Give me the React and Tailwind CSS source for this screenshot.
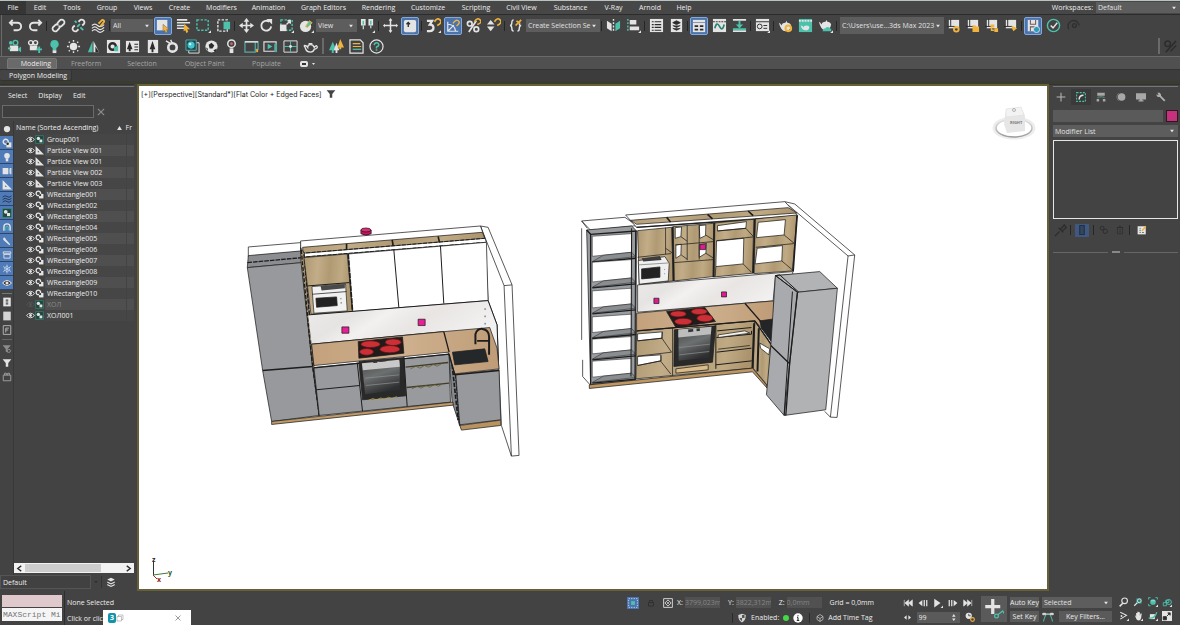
import { useState } from "react";
import clsx from "clsx";

const W = "#e4e4e4";
const T = "#4cc2ad";
const Y = "#f0b43c";
const G = "#8f8f8f";
const D = "#2b2b2b";

const line = (color, width = 1.5) => ({
  fill: "none",
  stroke: color,
  strokeWidth: width,
});

// All icons are drawn on a 16x16 grid
const icons = {
  undo: <path d="M5 2 2 5l3 3M2 5h8a4 4 0 0 1 0 8H6" {...line(W, 2)} />,
  redo: <path d="m11 2 3 3-3 3M14 5H6a4 4 0 0 0 0 8h4" {...line(W, 2)} />,
  link: (
    <g {...line(W, 1.9)}>
      <path d="m6 7 2-3 2-2a3 3 0 0 1 4 4l-3 3-3 0M10 9l-2 3-2 2a3 3 0 0 1-4-4l3-3 3 0" />
    </g>
  ),
  unlink: (
    <g {...line(W, 1.9)}>
      <path d="m8 4 2-2a3 3 0 0 1 4 4l-2 2M8 12l-2 2a3 3 0 0 1-4-4l2-2" />
      <path d="m4 3 2 2m4 5 3 3M6.500 9.500l3-3" stroke={T} />
    </g>
  ),
  bind: (
    <g {...line(W, 1.3)}>
      <path d="M1 8q3-3 6 0t7-1M1 11q3-3 6 0t7-1M1 14q3-3 6 0t7-1" />
      <path d="m8 6 4-4a2 2 0 0 1 2 2l-4 5" stroke={Y} strokeWidth="2" />
    </g>
  ),
  select: (
    <g>
      <path d="M1 1h12v12H1z" fill={W} />
      <path d="m8 6 7 6-3 0 1 3-2 1-1-3-2 1z" fill={Y} stroke="#6b5a35" strokeWidth="0.500" />
    </g>
  ),
  byName: (
    <g>
      <path d="M1 2h11M1 5h14M1 8h8M1 11h8" {...line(W, 1.7)} />
      <path d="m9 6 6 6-3 0 1 3-2 1-1-3-2 1z" fill={Y} />
    </g>
  ),
  region: (
    <g>
      <path d="M1 2h12v11H1z" {...line(T)} strokeDasharray="2.5 1.5" />
      <path d="M16 13v3h-3z" fill={W} />
    </g>
  ),
  crossing: (
    <g>
      <path d="M2 2h10v12H2z" {...line(W)} strokeDasharray="2.5 1.5" />
      <path d="M8 4h7v8H8z" fill={T} />
    </g>
  ),
  move: (
    <g fill={W}>
      <path d="M8 3v10M3 8h10" {...line(W, 1.8)} />
      <path d="m8 0 3 4H5zM8 16l3-4H5zM0 8l4-3v6zM16 8l-4-3v6z" />
    </g>
  ),
  rotate: (
    <g>
      <path d="M11 4a5.300 5.300 0 1 0 2 5" {...line(W, 2)} />
      <path d="M8 1h6v6z" fill={W} />
    </g>
  ),
  scale: (
    <g>
      <path d="M2 2h12v11H2z" {...line(T)} strokeDasharray="2.5 1.5" />
      <path d="M1 7h7v7H1z" fill={W} />
      <path d="m8 7 4-4M9 3h3v3" {...line(W)} />
      <path d="M16 13v3h-3z" fill={W} />
    </g>
  ),
  place: (
    <g>
      <circle cx="7" cy="9" r="6" fill={W} />
      <path d="m7 9 4-6 3 2-5 5z" fill={T} stroke={Y} />
      <path d="M16 13v3h-3z" fill={W} />
    </g>
  ),
  pivot: (
    <g>
      <path d="M1 1h5v7H1zM9 1h5v7H9z" fill={W} />
      <path d="M3.500 3v4M11.500 3v4" {...line(T, 1.5)} />
      <path d="M3.500 8v4M11.500 8v3" {...line(W, 1.2)} />
      <path d="M16 13v3h-3z" fill={W} />
    </g>
  ),
  manipulate: (
    <g fill={W}>
      <path d="M8 1v14M1 8h14" {...line(W, 1.6)} />
      <path d="M6 3h4L8 0zM6 13h4l-2 3zM2 6v4L0 8zM14 6v4l2-2z" />
    </g>
  ),
  keyboard: (
    <g>
      <rect x="1" y="1" width="14" height="14" rx="2" fill={W} />
      <path d="M6 9V4M4 6l2-2 2 2" {...line(D)} />
    </g>
  ),
  snap: (
    <g>
      <path d="M1 3h5.500L4 7q4 0 4 3.500T4 14H1" {...line(W, 2.4)} />
      <path d="M9 4q3-5 6-2t-3 6" {...line(Y, 1.8)} />
      <path d="M16 13v3h-3z" fill={W} />
    </g>
  ),
  angle: (
    <g>
      <path d="M2 3v11h12M2 6q8 0 9 8M2 14l7-7" {...line(W, 1.4)} />
      <path d="M8 5q3-5 6-3t-2 6" {...line(Y, 1.6)} />
    </g>
  ),
  percent: (
    <g>
      <path d="m3 15 8-12" {...line(W, 1.8)} />
      <circle cx="4" cy="6" r="2.500" {...line(W, 1.8)} />
      <circle cx="11" cy="12" r="2.500" {...line(W, 1.8)} />
      <path d="M9 4q3-5 6-2t-3 5" {...line(Y, 1.6)} />
    </g>
  ),
  spinner: (
    <g>
      <path d="m5 2 4 5H1zM5 14l4-5H1z" fill={W} />
      <path d="M9 4q3-5 6-2t-3 6" {...line(Y, 1.7)} />
    </g>
  ),
  named: (
    <g>
      <path d="M5 2Q3 2 3 5T1 8q2 0 2 3t2 3" {...line(W, 1.5)} />
      <path d="M9 14q2 0 2-3t2-3q-2 0-2-2" {...line(W, 1.5)} />
      <path d="m7 8 6-6M8 3l4 3" {...line(Y, 1.8)} />
    </g>
  ),
  mirror: (
    <g>
      <path d="m1 3 5 3v8l-5-3z" fill={W} />
      <path d="m15 3-5 3v8l5-3z" fill={T} />
      <path d="M8 1v14" {...line(W)} strokeDasharray="2 1.5" />
    </g>
  ),
  align: (
    <g>
      <path d="M2 1v14" {...line(T)} strokeDasharray="2 1.5" />
      <path d="M4 2h7v5H4zM4 9h10v4H4z" fill={W} />
      <path d="M16 13v3h-3z" fill={W} />
    </g>
  ),
  layers: (
    <g>
      <path d="M1 1h14v14H1z" fill={W} />
      <path d="M3 4h2M6 4h7M3 7h2M6 7h7M3 10h2M6 10h7M3 13h2M6 13h7" {...line(D, 1.2)} />
    </g>
  ),
  layerSet: (
    <g>
      <path d="M2 1h12v14H2z" fill={W} />
      <path d="m8 3 4 2-4 2-4-2zM4 8l4 2 4-2M4 11l4 2 4-2" fill={D} stroke={D} />
    </g>
  ),
  ribbon: (
    <g>
      <path d="M1 1h14v14H1z" fill={W} />
      <path d="M1 4h14" stroke="#7d8ca5" />
      <path d="M3 8h4M9 8h4M3 12h4M9 12h4" {...line(D, 2)} />
    </g>
  ),
  curve: (
    <g>
      <path d="M1 1h14v14H1z" fill={W} />
      <path d="M1 4h14" stroke={D} strokeDasharray="2 1" />
      <path d="M3 11q2-8 5-2t5-2" {...line("#26866f", 1.8)} />
    </g>
  ),
  schematic: (
    <g>
      <path d="M1 2h14M1 14h14" {...line(W, 2)} />
      <path d="M8 3v7M1 12h14" {...line(T, 2)} />
      <path d="m8 11 4-4H4z" fill={T} />
    </g>
  ),
  material: (
    <g>
      <path d="M1 1h14v13H1z" fill={W} />
      <path d="M1 4h14M9 8h4M9 11h4" {...line(D, 1)} />
      <circle cx="5" cy="9" r="2.500" {...line(D, 1)} />
      <path d="M16 13v3h-3z" fill={W} />
    </g>
  ),
  renderSetup: (
    <g>
      <path d="M1 5q1 0 3 3 0-3 4-3l1-2 1 2q3 0 4 3-1 6-6 6T1 5" fill={W} />
      <circle cx="11" cy="11" r="3" {...line(Y, 2.2)} />
    </g>
  ),
  renderFrame: (
    <g>
      <path d="M1 1h14v14H1z" fill={T} />
      <path d="M1 3h14" stroke={W} strokeWidth="2" strokeDasharray="2 1" />
      <path d="M3 8q2 0 3 2 0-2 3-2t3 2q0 3-4 3T3 8" fill={W} />
    </g>
  ),
  render: (
    <g>
      <path d="M1 4q1 0 3 3 0-3 4-3l1-2 1 2q3 0 4 3-1 6-6 6T1 4" fill={W} />
      <path d="M5 14q0-3 3-3 2-3 5 0 2 1 1 3z" fill={T} />
      <path d="M16 13v3h-3z" fill={W} />
    </g>
  ),
  projGear: (
    <g>
      <path d="M3 2h11v9H3z" fill={W} />
      <path d="M5 1v8M1 9h9" {...line(D, 1)} />
      <circle cx="11" cy="12" r="2.500" {...line(Y, 2)} />
    </g>
  ),
  projFolder: (
    <g>
      <path d="M3 2h11v9H3z" fill={W} />
      <path d="M5 1v8M1 9h9" {...line(D, 1)} />
      <path d="M8 8h3l1 1h3v6H8z" fill={Y} />
    </g>
  ),
  projTree: (
    <g>
      <path d="M3 2h11v9H3z" fill={W} />
      <path d="M5 1v8M1 9h9" {...line(D, 1)} />
      <path d="M7 7h4v3H7zM11 11h4v4h-4z" fill={Y} />
      <path d="M8 10v3h3" {...line(Y)} />
    </g>
  ),
  projSend: (
    <g>
      <path d="M3 2h11v9H3z" fill={W} />
      <path d="M5 1v8M1 9h9" {...line(D, 1)} />
      <path d="m9 8 6 3-4 3-1-2z" fill={Y} />
    </g>
  ),
  save: (
    <g>
      <path d="M2 1h12v13H2z" fill={W} />
      <path d="M5 1v5h6V1M5 14V9h5" {...line("#6a5a60", 1.2)} />
      <circle cx="12" cy="12" r="3.500" fill="#2c9bb8" stroke={W} />
    </g>
  ),
  check: (
    <g {...line(T, 1.5)}>
      <circle cx="8" cy="8" r="6.500" />
      <path d="m5 8 2.500 2.500L12 5" stroke={W} />
    </g>
  ),
  ghost: (
    <g {...line("#303030", 1.5)}>
      <path d="M3 12a6 6 0 1 1 11-4" />
      <circle cx="9" cy="8" r="2" />
    </g>
  ),
  camera: (
    <g>
      <circle cx="4" cy="4" r="2" fill={T} />
      <circle cx="9" cy="4" r="2.500" {...line(T)} />
      <path d="M3 7h9v6H3z" fill={W} />
      <path d="m12 10 3-2v6l-3-2z" fill={T} />
      <path d="M1 10h3" stroke={T} strokeWidth="2" />
    </g>
  ),
  cameraAdd: (
    <g>
      <circle cx="4" cy="4" r="2.300" {...line(W)} />
      <circle cx="9" cy="4" r="2.300" {...line(W)} />
      <path d="M3 7h8v5H3z" fill={W} />
      <path d="M13 8v7M10 11h6" {...line(T, 2)} />
    </g>
  ),
  bulb: (
    <g>
      <path d="M8 1a4.500 4.500 0 0 1 2 8.500V12H6V9.500A4.500 4.500 0 0 1 8 1" fill={T} />
      <path d="M6 12h4v3H6z" fill={W} />
    </g>
  ),
  sun: (
    <g>
      <circle cx="8" cy="8" r="4" fill={W} />
      <path d="M8 1v2M8 13v2M1 8h2M13 8h2M3 3l1 1M12 12l1 1M13 3l-1 1M3 13l1-1" {...line(W)} />
    </g>
  ),
  pyramid: (
    <g>
      <path d="M7 2v12H2z" fill={T} />
      <path d="M8 2v12h6z" fill={W} />
      <path d="M10 8v6h4z" fill={D} />
    </g>
  ),
  cardRound: (
    <g>
      <path d="M1 1h14v14H1z" fill={W} />
      <circle cx="7" cy="8" r="3.500" {...line(D, 2.5)} />
      <path d="m8 9 5-2v6H9z" fill={T} />
    </g>
  ),
  cardTree: (
    <g>
      <path d="M1 2h14v12H1z" fill={W} />
      <path d="m5 3 3 8H6v2H4v-2H2zM10 5h4v1h-4zM10 8h4v1h-4zM10 11h4v1h-4z" fill={D} />
    </g>
  ),
  cardTreeSingle: (
    <g>
      <path d="M3 1h11v14H3z" fill={W} />
      <path d="m8 2 3 9H9v3H7v-3H5z" fill={D} />
    </g>
  ),
  fireball: (
    <g>
      <circle cx="8" cy="9" r="4.500" {...line(W, 2.8)} />
      <path d="m1 2 5 3M6 1l2 4" {...line(W, 1.5)} />
    </g>
  ),
  sphereStack: (
    <g>
      <path d="M4 4h11v11H4z" {...line(W, 1)} />
      <path d="M1 1h11v11H1z" fill="#1d4a50" stroke="#58a9a4" />
      <circle cx="6.500" cy="6.500" r="3.800" fill="#43c6ce" />
      <circle cx="5.500" cy="5.500" r="1.200" fill="#e8ffff" />
    </g>
  ),
  ball: (
    <g>
      <circle cx="8" cy="8" r="6.500" fill={W} />
      <path d="m5 6 3-2 3 3-2 3-3 0zM10 12l4-2-2 4zM2 9l2 1v3z" fill={D} />
    </g>
  ),
  lamp: (
    <g>
      <circle cx="8" cy="5" r="4" {...line(W, 1.6)} />
      <circle cx="8" cy="5" r="1.500" fill="#c66" />
      <path d="M6 10h4v5H6z" fill={W} />
    </g>
  ),
  frameA: (
    <g>
      <path d="M1 3h11v11H1zM12 3h3v8h-3" {...line("#58a9a4", 1.3)} />
      <path d="M1 3h14" {...line(W)} />
      <path d="M13 11h2v3h-2z" fill={Y} />
    </g>
  ),
  framePlay: (
    <g>
      <path d="M1 3h13v10H1z" {...line(W, 1.2)} />
      <path d="m5 5 5 3-5 3z" fill={T} />
      <path d="M12 5h3v9h-3z" fill="#58a9a4" />
    </g>
  ),
  frameGrid: (
    <g>
      <path d="M1 2h14v12H1z" {...line(W, 1)} />
      <path d="M8 2v12M1 8h14" {...line(T, 1)} />
      <circle cx="8" cy="8" r="1.500" fill={W} />
    </g>
  ),
  teapot: (
    <g>
      <path d="M1 7q2-1 4 2 0-3 3-3t4 3q2-3 3-1t-3 3q-1 3-4 3-4 0-5-3T1 7" {...line(W, 1.4)} />
      <path d="M6 5h4" {...line(W)} />
    </g>
  ),
  forest: (
    <g>
      <path d="m4 3 4 9H5v3H3v-3H0z" fill={T} />
      <path d="m8 4 3 8H9v3H7v-3H5z" fill={W} />
      <path d="m12 0 4 9h-3v2h-2V9H9z" fill={Y} />
    </g>
  ),
  listDoc: (
    <g>
      <path d="M1 1h11l3 3v11H1z" {...line(W, 1.3)} />
      <path d="M4 5h8M4 8h9" {...line(Y, 1.3)} />
      <path d="M4 11h9" {...line(T, 1.3)} />
    </g>
  ),
  help: (
    <g {...line(W, 1.3)}>
      <circle cx="8" cy="8" r="7" />
      <path d="M5.500 6.500Q6 4 8 4t2.500 2Q10.500 7.500 8 8.500V10M8 11v1.500" stroke={T} strokeWidth="1.600" />
    </g>
  ),
  vise: (
    <g {...line("#2d2d2d", 1.6)}>
      <circle cx="5" cy="5" r="3" />
      <path d="m3 14 11-12M8 13l6-6" />
    </g>
  ),
  plus: <path d="M8 1v14M1 8h14" {...line("#b5b5b5", 1.7)} />,
  modify: (
    <g>
      <path d="M1 1h14v14H1z" {...line(T, 1.7)} strokeDasharray="3 2" />
      <path d="M5 12q0-7 7-7" {...line(W, 2.4)} />
    </g>
  ),
  hierarchy: (
    <g>
      <path d="M2 1h12v5H2zM1 11h4v4H1zM11 11h4v4h-4z" fill="#a8a8a8" />
      <path d="M3 10V8h10v2M8 6v2" {...line("#5d9a90", 1.2)} />
    </g>
  ),
  motion: (
    <g>
      <circle cx="9" cy="8" r="6" fill="#a8a8a8" />
      <path d="M4 2q-5 6 0 12" {...line("#777", 1.5)} />
    </g>
  ),
  display: <path d="M0 2h16v10H0zM6 12h4v1h2v2H4v-2h2z" fill="#a8a8a8" />,
  wrench: (
    <path d="M2 1h4l2 3v2l7 7-2 2-7-7H3L1 6V3l2 2 1-1z" fill="#b0b0b0" />
  ),
  pin: <path d="m2 14 5-5M6 5l5 5M8 7l4-5 2 3-5 4" {...line("#2d2d2d", 1.5)} />,
  stackShow: <path d="M5 2h6v12H5z" fill="#33465f" stroke="#20304a" strokeWidth="1.500" />,
  unique: (
    <g {...line("#2d2d2d", 1.5)}>
      <circle cx="5" cy="5" r="3" />
      <circle cx="10" cy="10" r="3.500" />
    </g>
  ),
  trash: <path d="M4 4h8v10H4zM3 4h10M6 2h4M8 6v6" {...line("#2d2d2d", 1.2)} />,
  configure: (
    <g>
      <path d="M1 2h13v13H1z" fill={W} />
      <path d="M4 6h2M4 9h2M4 12h2M8 12h3" {...line("#555", 1.3)} />
      <path d="m7 9 6-8 2 2-6 7z" fill={Y} />
    </g>
  ),
  dot: <circle cx="8" cy="8" r="5" fill={W} />,
  shapes: (
    <g>
      <circle cx="6" cy="6" r="4" {...line(W, 2.4)} />
      <path d="M7 7h8v8H7z" fill={W} />
      <circle cx="9" cy="9" r="2" fill={D} />
    </g>
  ),
  lightbulb: (
    <g fill={W}>
      <circle cx="8" cy="6" r="4.500" />
      <path d="M6 10h4v5H6z" />
    </g>
  ),
  video: <path d="M1 3h9v10H1zM11 4h1v8h-1zM13 3h2v10h-2z" fill={W} />,
  ruler: <path d="M1 0v15h15zM5 8v3h3z" fill={W} fillRule="evenodd" />,
  waves: (
    <path d="M1 5q4-4 7-1t7-1M1 9q4-4 7-1t7-1M1 13q4-4 7-1t7-1" {...line("#1f3350", 1.4)} />
  ),
  group: (
    <g>
      <path d="M1 1h14v14H1z" fill="#20483f" stroke="#3a8f7f" />
      <circle cx="6" cy="6" r="3" fill={W} />
      <path d="M8 8h5v5H8z" fill={W} />
    </g>
  ),
  magnet: (
    <g>
      <path d="M3 14V8a5 5 0 0 1 10 0v6" {...line(W, 2.2)} />
      <path d="M6 14V9a2 2 0 0 1 4 0v5" {...line(T, 1.3)} />
    </g>
  ),
  bone: <path d="M2 3q3-2 4 2l7 8q0 2-2 1L4 8Q1 6 2 3" fill={W} />,
  container: <path d="M2 3h12v3H2zM3 7h10v6H3z" {...line(W, 1.4)} />,
  snow: (
    <g {...line("#d5e3f5", 1.2)}>
      <circle cx="8" cy="8" r="4" strokeDasharray="2 1" />
      <path d="M8 1v14M2 4l12 8M14 4 2 12" />
    </g>
  ),
  eye: (
    <g>
      <path d="M1 8q7-8 14 0-7 8-14 0" fill={D} stroke={W} strokeWidth="1.700" />
      <circle cx="8" cy="8" r="2.500" fill={W} />
    </g>
  ),
  docS: (
    <g>
      <path d="M2 1h12v14H2z" fill={W} />
      <path d="M6 5h4M6 8h4M6 11h4" {...line("#444", 1.8)} />
    </g>
  ),
  doc: <path d="M2 1h12v14H2z" fill="#d4d4d4" />,
  docF: (
    <g {...line("#b5b5b5", 1.5)}>
      <path d="M2 1h12v14H2z" />
      <path d="M6 12V5h5M6 8h4" />
    </g>
  ),
  filterOff: (
    <g>
      <path d="M1 2h13L9 8v6l-3-2V8z" fill="#8c8c8c" />
      <circle cx="11" cy="11" r="2.500" {...line("#8c8c8c")} />
    </g>
  ),
  filter: <path d="M1 2h14L10 8v6H6V8z" fill={W} />,
  pouch: <path d="M2 5h12v9H2zM4 5V2h3v3M9 5V2h3v3" {...line("#a5a5a5", 1.4)} />,
  stack: <path d="m8 1 6 3-6 3-6-3zM2 7l6 3 6-3v2l-6 3-6-3zM2 11l6 3 6-3v2l-6 3-6-3z" fill={W} />,
  isolate: (
    <g>
      <path d="M1 1h14v14H1z" {...line("#bfd6f5", 1.5)} strokeDasharray="2 2" />
      <path d="M5 5h6v6H5z" fill={T} />
    </g>
  ),
  lock: <path d="M3 7h10v7H3zM5 7V3h6v4" {...line("#2b2b2b", 1.5)} />,
  absolute: (
    <g {...line(W, 1.4)}>
      <path d="M1 1h14v14H1z" />
      <path d="m8 3 5 5-5 5-5-5z" />
      <circle cx="8" cy="8" r="1" />
    </g>
  ),
  shield: (
    <g>
      <path d="m8 1 6 2q0 9-6 12-6-3-6-12z" fill="#d5d5d5" />
      <path d="M8 3h4v5H8zM4 8h4v5q-3-2-4-5" fill="#555" />
    </g>
  ),
  info: (
    <g>
      <circle cx="8" cy="8" r="7.500" fill="#fff" />
      <path d="M8 7v5M6 12h4M6.500 7H8M8 3.500v1.800" {...line(D, 1.8)} />
    </g>
  ),
  cube: <path d="m8 1 6 4v6l-6 4-6-4V5zM2 5l6 4 6-4M8 9v6" {...line(W, 1.2)} />,
  toStart: <path d="M2 3v10M9 3v10L3 8zM15 3v10L9 8z" fill={W} stroke={W} />,
  prevFrame: <path d="M7 3v10L1 8zM9 3h2v10H9zM13 3h2v10h-2z" fill={W} />,
  play: (
    <g fill={W}>
      <path d="m2 1 10 7-10 7zM16 12v4h-4z" />
    </g>
  ),
  nextFrame: <path d="M9 3v10l6-5zM1 3h2v10H1zM5 3h2v10H5z" fill={W} />,
  toEnd: <path d="M14 3v10M7 3v10l6-5zM1 3v10l6-5z" fill={W} stroke={W} />,
  keyMode: <path d="M6 3v10L0 8zM10 3v10l6-5z" fill={W} />,
  timeCfg: (
    <g>
      <circle cx="6" cy="6" r="5" fill={W} />
      <path d="M6 3v3h3" {...line(D, 1.2)} />
      <circle cx="12" cy="12" r="3" {...line(Y, 1.8)} />
    </g>
  ),
  bigKey: (
    <g>
      <path d="M7 0v12M1 6h12" {...line(W, 2.6)} />
      <circle cx="10" cy="13.500" r="1.500" {...line(T, 1)} />
      <path d="m11 12.500 4-3 1 2" {...line(T, 1)} />
    </g>
  ),
  tangent: (
    <g>
      <path d="M2 14q2-10 6-10t6 10" {...line(T, 1.3)} />
      <path d="M1 3h4v2H1zM11 3h4v2h-4zM5 4h6" fill={W} stroke={W} strokeWidth="1" />
    </g>
  ),
  zoom: (
    <g {...line(W, 1.8)}>
      <circle cx="9" cy="6" r="4.500" />
      <path d="m6 10-5 5" strokeWidth="2.500" />
    </g>
  ),
  zoomAll: (
    <g>
      <path d="M5 2h9v9H5z" fill="#2f8378" />
      <circle cx="10" cy="6" r="3" {...line(W)} />
      <path d="m7 9-5 5" {...line(W, 2)} />
    </g>
  ),
  zoomExt: (
    <g>
      <path d="M1 1h3M1 1v3M15 1h-3M15 1v3M1 14h3M1 14v-3" {...line(T)} />
      <circle cx="8" cy="8" r="4.500" fill={T} />
      <path d="M5 6h6" stroke={W} />
      <path d="M16 12v4h-4z" fill={W} />
    </g>
  ),
  zoomExtAll: (
    <g>
      <path d="M2 9h5v5H2zM6 5h5v4H6z" {...line(T, 1.4)} />
      <circle cx="11" cy="8" r="4" {...line(T, 1.6)} />
      <path d="M16 12v4h-4z" fill={W} />
    </g>
  ),
  fov: (
    <g>
      <path d="m2 2 10 5-10 6" {...line(W, 1.7)} />
      <circle cx="4" cy="8" r="1.500" fill={W} />
      <path d="M16 12v4h-4z" fill={W} />
    </g>
  ),
  hand: (
    <g fill={W}>
      <path d="M3 7h1l1 2V3h2v4V1h2v6V2h2v6l1-4h2l-1 7q-1 4-4 4T5 12z" />
      <path d="M16 12v4h-4z" />
    </g>
  ),
  orbit: (
    <g>
      <path d="M3 5h8v8H3z" fill={W} />
      <path d="M1 11q10 2 13-9" {...line(T, 2)} />
      <path d="M16 12v4h-4z" fill={W} />
    </g>
  ),
  maximize: (
    <g>
      <path d="M0 0h16v16H0z" fill={W} />
      <path d="M2 9h5v5H2zM8 8l5-5M9 3h4v4" fill={D} stroke={D} strokeWidth="1.500" />
    </g>
  ),
  windows: <path d="M2 5h9v9H2zM5 5V2h9v9h-3" {...line("#888", 1)} />,
  close: <path d="m3 3 10 10M13 3 3 13" {...line(G, 1.8)} />,
};

const Icon = ({ name, className = "h-4 w-4" }) => (
  <svg viewBox="0 0 16 16" className={clsx("block shrink-0", className)} aria-hidden="true">
    {icons[name]}
  </svg>
);

const ToolButton = ({ name, active, className = "w-5" }) => (
  <button
    type="button"
    aria-label={name}
    className={clsx("flex h-[19px] shrink-0 items-center justify-center", className)}
  >
    <span
      className={clsx(
        "flex h-[18px] w-[18px] items-center justify-center",
        active && "rounded-xs border border-[#83a9dd] bg-[#4b73ae]"
      )}
    >
      <Icon name={name} className={active ? "h-3.5 w-3.5" : "h-[15px] w-[15px]"} />
    </span>
  </button>
);

const Separator = () => (
  <span className="flex w-[3px] shrink-0 justify-center">
    <span className="h-2.5 w-px bg-[#262626]" />
  </span>
);

const Dropdown = ({ label, value, className }) => (
  <div className={clsx("relative shrink-0", className)}>
    <select
      aria-label={label}
      className="block h-full w-full appearance-none overflow-hidden bg-[#5d5d5d] pr-2 pl-0.5 text-[#e0e0e0] outline-none"
    >
      <option>{value}</option>
    </select>
    <svg viewBox="0 0 4 3" className="pointer-events-none absolute top-1/2 right-1 h-[3px] w-1 -translate-y-1/2">
      <path d="M0 0h4L2 3z" fill={W} />
    </svg>
  </div>
);

const menus = [
  ["File", "w-[26px]"],
  ["Edit", "w-[28px]"],
  ["Tools", "w-[36px]"],
  ["Group", "w-[34px]"],
  ["Views", "w-[38px]"],
  ["Create", "w-[35px]"],
  ["Modifiers", "w-[49px]"],
  ["Animation", "w-[45px]"],
  ["Graph Editors", "w-[65px]"],
  ["Rendering", "w-[45px]"],
  ["Customize", "w-[54px]"],
  ["Scripting", "w-[42px]"],
  ["Civil View", "w-[49px]"],
  ["Substance", "w-[49px]"],
  ["V-Ray", "w-[37px]"],
  ["Arnold", "w-[36px]"],
  ["Help", "w-[32px]"],
];

const MenuBar = () => (
  <nav className="flex h-[15px] shrink-0 items-center border-t border-b border-t-[#b9c4c2] border-b-[#2c2c2c] bg-[#474747]">
    {menus.map(([name, width], i) => (
      <a
        key={name}
        href="#"
        className={clsx("flex h-full items-center justify-center", width, i === 0 && "bg-[#363636]")}
      >
        {name}
      </a>
    ))}
    <span className="ml-auto pr-[3px]">Workspaces:</span>
    <Dropdown label="Workspaces" value="Default" className="h-[11px] w-[84px]" />
  </nav>
);

const rowOne = [
  "undo", "redo", "|", "link", "unlink", "bind", "|", "@all", "*select", "byName", "region", "crossing", "|",
  "move", "rotate", "scale", "place", "@view", "pivot", "|", "manipulate", "*keyboard", "|", "snap", "*angle",
  "percent", "spinner", "|", "named", "@set", "|", "mirror", "align", "|", "layers", "layerSet", "|", "*ribbon",
  "curve", "schematic", "|", "material", "|", "renderSetup", "renderFrame", "render", "|", "@path",
  "-projGear", "-projFolder", "-projTree", "-projSend", "|", "*save", "check", "ghost",
];

const dropdowns = {
  "@all": <Dropdown label="Selection filter" value="All" className="h-[13px] w-[42px]" />,
  "@view": <Dropdown label="Coordinate system" value="View" className="h-[13px] w-[41px]" />,
  "@set": <Dropdown label="Selection set" value="Create Selection Se" className="h-[13px] w-[74px]" />,
  "@path": <Dropdown label="Project folder" value="C:\Users\use...3ds Max 2023" className="ml-0.5 h-[17px] w-[104px]" />,
};

const rowTwo = [
  "camera", "cameraAdd", "bulb", "sun", "pyramid", "cardRound", "cardTree", "cardTreeSingle",
  "fireball", "sphereStack", "ball", "lamp", "frameA", "framePlay", "frameGrid", "teapot",
];

const Toolbars = () => (
  <div className="shrink-0 border-b border-[#6a6a6a] bg-[#434343] pl-px">
    <div className="flex h-[21px] items-center border-l border-[#6a6a6a] pl-[3px]">
      {rowOne.map((item, i) => {
        if (item === "|") return <Separator key={i} />;
        if (item[0] === "@") return <div key={i}>{dropdowns[item]}</div>;
        if (item[0] === "*") return <ToolButton key={i} name={item.slice(1)} active />;
        if (item[0] === "-") return <ToolButton key={i} name={item.slice(1)} className="w-[19px]" />;
        return <ToolButton key={i} name={item} />;
      })}
    </div>
    <div className="flex h-5 items-center border-l border-[#6a6a6a] pl-[3px]">
      <div className="grid w-[315px] grid-cols-16">
        {rowTwo.map((name) => (
          <ToolButton key={name} name={name} className="w-full" />
        ))}
      </div>
      <span className="mx-0.5 h-4 w-0.5 bg-[#6a6a6a]" />
      <ToolButton name="forest" />
      <ToolButton name="listDoc" />
      <ToolButton name="help" />
      <span className="ml-auto h-4 w-0.5 bg-[#6a6a6a]" />
      <ToolButton name="vise" />
    </div>
  </div>
);

const ribbonTabs = [
  ["Freeform", "w-[58px]"],
  ["Selection", "w-[54px]"],
  ["Object Paint", "w-[71px]"],
  ["Populate", "w-[53px]"],
];

const Ribbon = () => (
  <div className="shrink-0">
    <div className="flex h-3 items-end bg-[#505050] pl-[7px] text-[#a5a5a5]">
      <button
        type="button"
        className="h-[11px] w-[50px] rounded-t-xs border border-[#777] bg-[#6a6a6a] pl-2 leading-[9px] text-[#e8e8e8]"
      >
        Modeling
      </button>
      {ribbonTabs.map(([name, width]) => (
        <button key={name} type="button" className={clsx("h-[11px]", width)}>
          {name}
        </button>
      ))}
      <button type="button" aria-label="Ribbon display" className="flex h-[11px] items-center gap-1 pl-[7px]">
        <span className="flex h-1.5 w-2 items-center justify-center rounded-xs bg-[#e4e4e4]">
          <span className="h-0.5 w-1 bg-[#333]" />
        </span>
        <svg viewBox="0 0 6 4" className="h-0.5 w-[3px]">
          <path d="M0 0h6L3 4z" fill={W} />
        </svg>
      </button>
    </div>
    <div className="flex h-3 items-center border-t border-[#333] bg-[#3c3c3c]">
      <span className="flex h-[11px] items-center rounded-xs border-r border-b border-[#333] bg-[#444] pr-1 pl-[9px] whitespace-nowrap">
        Polygon Modeling
      </span>
    </div>
    <div className="h-[3px] bg-[#3b3c31]" />
  </div>
);

const railTop = [
  "shapes", "lightbulb", "video", "ruler", "waves", "group", "magnet", "bone", "container", "snow", "eye",
];

const nodes = [
  { name: "Group001", icon: "group" },
  { name: "Particle View 001", icon: "ruler" },
  { name: "Particle View 001", icon: "ruler" },
  { name: "Particle View 002", icon: "ruler" },
  { name: "Particle View 003", icon: "ruler" },
  ...["001", "002", "003", "004", "005", "006", "007", "008", "009", "010"].map((n) => ({
    name: `WRectangle${n}`,
    icon: "shapes",
  })),
  { name: "ХОЛ", icon: "group", hidden: true },
  { name: "ХОЛ001", icon: "group" },
];

const SceneExplorer = () => {
  const [query, setQuery] = useState("");

  return (
    <aside className="flex w-[134px] shrink-0 flex-col border-t border-[#333] bg-[#434343]">
      <div className="mt-px h-px bg-[#777]" />
      <div className="flex h-[17px] items-center gap-[11px] pl-2">
        <a href="#">Select</a>
        <a href="#">Display</a>
        <a href="#">Edit</a>
      </div>
      <div className="flex h-[15px] items-center gap-0.5 pl-0.5">
        <input
          aria-label="Find"
          value={query}
          onChange={(e) => setQuery(e.target.value)}
          className="h-[13px] w-[92px] border border-[#6a6a6a] bg-[#3e3e3e] px-1 outline-none"
        />
        <button type="button" aria-label="Clear search">
          <Icon name="close" className="h-2.5 w-2.5" />
        </button>
      </div>
      <div className="flex min-h-0 flex-1 pt-0.5">
        <div className="flex w-[14px] shrink-0 flex-col items-center border-r border-[#383838]">
          <button type="button" aria-label="All" className="flex h-[15px] items-center">
            <Icon name="dot" className="h-2.5 w-2.5" />
          </button>
          {railTop.map((name) => (
            <button
              key={name}
              type="button"
              aria-label={name}
              className="flex h-[14px] w-[13px] items-center justify-center border-b border-[#2e4468] bg-[#4f7cb8]"
            >
              <Icon name={name} className="h-2.5 w-2.5" />
            </button>
          ))}
          <div className="mt-[3px] flex flex-col gap-1 border-t border-[#777] pt-[3px]">
            <Icon name="docS" className="h-2.5 w-2.5" />
            <Icon name="doc" className="h-2.5 w-2.5" />
            <Icon name="docF" className="h-2.5 w-2.5" />
          </div>
          <div className="mt-1 flex flex-col gap-1 border-t border-[#666] pt-1">
            <Icon name="filterOff" className="h-2.5 w-2.5" />
            <Icon name="filter" className="h-2.5 w-2.5" />
            <Icon name="pouch" className="h-2.5 w-2.5" />
          </div>
        </div>
        <div className="flex min-w-0 flex-1 flex-col">
          <div className="flex h-[13px] items-center px-0.5">
            <span>Name (Sorted Ascending)</span>
            <svg viewBox="0 0 6 5" className="mr-1 ml-auto h-1 w-[5px]">
              <path d="M0 5h6L3 0z" fill={W} />
            </svg>
            <span>Fr</span>
          </div>
          <ul>
            {nodes.map((node, i) => (
              <li key={i} className="flex h-[11px] items-center pl-3">
                <Icon name="eye" className={clsx("h-[9px] w-[9px]", node.hidden && "opacity-10")} />
                <Icon name={node.icon} className="h-[9px] w-[9px]" />
                <span
                  className={clsx(
                    "ml-px flex h-full flex-1 items-center pl-0.5",
                    i % 2 ? "bg-[#4f4f4f]" : "bg-[#464646]",
                    node.hidden && "text-[#8a8a8a]"
                  )}
                >
                  {node.name}
                </span>
                <span className={clsx("ml-px h-full w-[7px]", i % 2 ? "bg-[#4f4f4f]" : "bg-[#464646]")} />
              </li>
            ))}
          </ul>
          <div className="mt-auto mb-0.5 flex h-[10px] items-center justify-between bg-[#f2f2f2] px-0.5">
            <svg viewBox="0 0 8 8" className="h-[7px] w-[7px]">
              <path d="M6 1 2 4l4 3" {...line(D, 1.5)} />
            </svg>
            <span className="mr-auto ml-0.5 h-[8px] w-[76px] bg-[#cdcdcd]" />
            <svg viewBox="0 0 8 8" className="h-[7px] w-[7px]">
              <path d="m2 1 4 3-4 3" {...line(D, 1.5)} />
            </svg>
          </div>
        </div>
      </div>
      <div className="flex h-[16px] items-start">
        <button
          type="button"
          className="flex h-[14px] w-[91px] items-center border border-[#555] bg-[#414141] pl-0.5"
        >
          Default
        </button>
        <span className="flex h-[14px] items-center">
          <svg viewBox="0 0 6 4" className="mx-[3px] h-0.5 w-1">
            <path d="M0 0h6L3 4z" fill={D} />
          </svg>
          <span className="mr-1 h-3 w-px bg-[#333]" />
          <Icon name="stack" className="h-2.5 w-2.5" />
        </span>
      </div>
    </aside>
  );
};

const WallKitchen = () => (
  <g transform="translate(240 215) scale(0.333)" stroke="#1d1d1d" strokeWidth="2.200" strokeLinejoin="round">
    {/* right wall */}
    <path d="M722 33 745 37 817 210 838 722 815 724 785 632 776 440 772 330 745 257 737 80z" fill="#fff" />
    <path d="M722 33 793 212 817 210M793 212 815 724" fill="none" />
    {/* top frame */}
    <path d="M182 78 722 33 740 82 182 127z" fill="#fff" />
    <path d="M188 97 728 52 735 70 190 115z" fill="url(#wood)" />
    <path d="M320 86v18M457 75l3 18M595 64l4 18" strokeWidth="5" />
    <path d="M183 115 735 70M183 127 740 82" strokeDasharray="12 4" strokeWidth="3" />
    {/* tall unit */}
    <path d="M25 96 182 83 182 110 25 125z" fill="#fff" />
    <path d="M25 122 182 108 190 143 22 158z" fill="#8b8d90" />
    <path d="M22 143 186 128" strokeWidth="4" strokeDasharray="14 3" />
    <path d="M22 158 185 143 218 455 238 602 95 620 68 467z" fill="#97999c" />
    <path d="M68 467 218 455" strokeWidth="4" />
    <path d="M182 98 193 115 222 455 238 602 218 455 183 140z" fill="#ab9878" />
    <path d="M184 105 214 420 238 602M192 118 222 450" fill="none" strokeWidth="4" strokeDasharray="12 5" />
    {/* microwave niche */}
    <path d="M192 128 322 117 338 290 213 298z" fill="url(#wood)" />
    <path d="M203 213 328 203" strokeWidth="3" />
    <path d="M216 215 317 207 322 288 222 295z" fill="#f1f1f1" strokeWidth="2" />
    <path d="M242 213 315 207 315 220 245 227z" fill="#4a4a4a" stroke="none" />
    <path d="M217 238 320 230" />
    <path d="M228 250 290 246 292 272 230 277z" fill="#222" />
    <path d="M303 250v3M304 262v4" stroke="#777" strokeWidth="4" />
    {/* upper doors */}
    <path d="M325 117 740 82 745 257 338 290z" fill="#fff" />
    <path d="M462 105 477 278M602 93 612 266" strokeWidth="3" />
    <path d="M325 117 338 290" strokeWidth="5" strokeDasharray="16 3" />
    {/* backsplash */}
    <path d="M205 300 745 257 772 330 775 405 750 338 612 350 215 388z" fill="url(#marble)" stroke="none" />
    <path d="M205 300 745 257 772 330 776 440M215 388 612 350" fill="none" strokeWidth="3" />
    <path d="M736 280v60" strokeDasharray="5 17" />
    {/* lower fronts */}
    <path d="M222 458 628 418 632 562 238 602z" fill="#989a9d" />
    <path d="M228 525 360 512M352 443 368 590M492 425 502 574" fill="none" strokeWidth="3" />
    <path d="M497 457 625 443M500 518 628 505" stroke="#423d2a" strokeWidth="4" />
    <path d="m512 462 16-8 12 6 14-8 12 5 14-8 12 5 14-8M516 522l16-8 12 6 14-8 12 5 14-8 12 5 14-8" fill="none" stroke="#655b2c" />
    <path d="M628 418 648 478 660 632 637 562z" fill="#85888c" />
    <path d="M637 450 655 615M648 478 660 632" strokeWidth="5" strokeDasharray="13 5" />
    <path d="M648 478 778 465 783 615 660 630z" fill="#97999c" />
    <path d="M660 632 783 616 783 632 665 646z" fill="#b9935f" />
    <path d="M95 620 640 562 640 571 95 629z" fill="#c09b69" />
    {/* counter */}
    <path d="M215 388 615 350 750 338 772 400 778 462 645 477 625 412 222 452z" fill="url(#counter)" />
    <path d="M222 459 628 418 645 480 778 467M612 350 628 412" fill="none" strokeWidth="4" />
    {/* hob and oven */}
    <path d="M355 380 488 366 492 415 357 430z" fill="#231a1a" />
    <g fill="#cc2f35" stroke="#5a1719">
      <ellipse cx="392" cy="388" rx="29" ry="10" />
      <ellipse cx="460" cy="382" rx="24" ry="10" />
      <ellipse cx="380" cy="411" rx="21" ry="10" />
      <ellipse cx="450" cy="403" rx="30" ry="11" />
    </g>
    <path d="M357 440 492 428 498 543 368 555z" fill="#29292a" />
    <path d="M366 450 480 438 480 525 376 538z" fill="url(#oven)" stroke="none" />
    <path d="M366 445 478 435 480 456 369 466z" fill="#c9c9c9" stroke="none" />
    <path d="M400 441 412 440M418 438 440 436" stroke="#333" strokeWidth="7" />
    <path d="M376 490 478 480M378 512 478 502" stroke="#8d9090" />
    <path d="m385 557 14-6 10 5 14-7 10 5 14-7 10 5 14-7" fill="none" stroke="#b7a443" />
    {/* sink and tap */}
    <path d="M638 412 735 402 745 440 645 450z" fill="#25282b" />
    <path d="M707 388V358Q712 341 728 342 747 344 748 365V420M712 378h34" fill="none" strokeWidth="6" />
    {/* lights and sockets */}
    <path d="M363 45v11q15 9 31 0V45z" fill="#c4145c" />
    <ellipse cx="378" cy="45" rx="15" ry="6" fill="#e02a74" />
    <path d="M306 336h21v19h-21zM535 313h21v19h-21z" fill="#ea1e96" />
  </g>
);

// white openings of the tall shelf unit
const shelves = [
  [124, 190],
  [202, 267],
  [288, 345],
  [366, 419],
  [433, 483],
  [499, 553],
];

const OpenKitchen = () => (
  <g transform="translate(570 195) scale(0.333)" stroke="#1d1d1d" strokeWidth="2.200" strokeLinejoin="round">
    {/* walls */}
    <path d="M645 20 675 27 855 180 802 668 782 667 765 650" fill="none" />
    <path d="M655 30 835 183 855 180M835 183 782 667" fill="none" />
    <path d="M35 100V435M38 495V545L62 572M35 78 165 67 200 92 62 106zM35 78 52 100" fill="none" />
    {/* top frame */}
    <path d="M167 60 645 20 684 62 200 97z" fill="#fff" />
    <path d="M182 76 655 38 682 54 200 88z" fill="url(#wood)" />
    <path d="m290 67 12 14M413 58l15 14M535 48l15 14" strokeWidth="5" />
    <path d="M200 97 684 65" strokeWidth="4" />
    {/* tall shelves */}
    <path d="M50 105 185 93 200 108 197 555 62 570z" fill="#9a9da0" />
    <path d="M50 105 62 118 200 108M62 118V570" fill="none" strokeWidth="4" />
    {shelves.map(([top, bottom]) => (
      <g key={top}>
        <path d={`M67 ${top} 185 ${top - 8} 185 ${bottom - 18} 67 ${bottom - 6}z`} fill="#fff" strokeWidth="1.500" />
        <path
          d={`M67 ${bottom + 10} 100 ${bottom - 9} 185 ${bottom - 18} 197 ${bottom - 5}z`}
          fill="#8b8e91"
          strokeWidth="1.500"
        />
        <path d={`M67 ${bottom + 12} 198 ${bottom}`} strokeWidth="4" />
      </g>
    ))}
    <path d="M185 100 183 545M197 108 195 555" strokeWidth="3" />
    {/* upper cabinets */}
    <path d="M203 107 305 97 310 258 208 268z" fill="url(#wood)" />
    <path d="M287 98v80M203 187 303 176M287 160l20 14" fill="none" />
    <path d="M205 197 285 185 298 205 295 258 208 268z" fill="#efefef" />
    <path d="M215 190 270 183 275 195 220 200z" fill="#3d3d3d" stroke="none" />
    <path d="M215 222 270 216 270 247 215 252z" fill="#222" />
    <path d="M205 210 297 204M284 222v3M284 235v3" stroke="#777" />
    <path d="M310 95 432 85 430 245 313 258z" fill="url(#wood)" />
    <path d="M316 98 335 96 333 125 316 130zM388 92 408 90 407 122 390 130zM318 150 334 148 333 180 318 190zM388 150 410 145 408 175 388 187z" fill="#fff" />
    <path d="M352 92v104M388 90v104M316 150 430 140M313 203 430 194M334 180l18 13M408 175l22 14M333 125l19 14M407 120l23 14" fill="none" />
    <path d="M435 84 552 73 548 235 433 246z" fill="url(#wood)" />
    <path d="M443 92 530 80 528 100 443 108zM440 138 522 130 520 207 438 215z" fill="#fff" />
    <path d="M443 108 528 100 550 124M440 137 550 126M520 207l25 25M438 215 436 245" fill="none" />
    <path d="M556 72 682 60 668 228 553 236z" fill="url(#wood)" />
    <path d="M565 82 647 74 643 120 560 128zM562 160 638 152 636 198 556 207z" fill="#fff" />
    <path d="M558 157 672 146M643 120l30 25M636 198l32 27" fill="none" />
    <path d="M308 95 311 258M433 84 431 247M555 72 550 236M682 62 670 230" strokeWidth="5" />
    {/* backsplash */}
    <path d="M203 270 668 230 670 238 617 242 610 318 203 352z" fill="url(#marble)" />
    {/* base cabinets */}
    <path d="M200 408 555 378 548 520 198 552z" fill="url(#wood)" />
    <path d="M203 417 278 411 276 430 203 438zM203 485 273 480 273 498 203 512z" fill="#fff" />
    <path d="M203 438 276 430 305 472 203 484M276 412v20M273 482v18l30 38M203 512 273 498M308 400V542" fill="none" />
    <path d="M442 408 545 398M440 428 545 418 545 408M440 472 545 460M438 510 546 498M438 390V522" fill="none" strokeWidth="3" />
    <path d="M445 420 525 408 540 415 445 428zM445 463 540 452" fill="#f4f1e8" />
    <path d="M555 378 605 450 595 575 550 520z" fill="url(#wood)" />
    <path d="M567 400 563 530M553 385 548 520" strokeWidth="6" />
    <path d="M570 445 600 462 597 480 572 460z" fill="#fff" />
    <path d="M58 570 548 520 590 570 592 580 548 531 58 581z" fill="#be9762" />
    {/* counter */}
    <path d="M200 355 525 325 612 318 612 440 555 378 200 408z" fill="url(#counter)" />
    <path d="M525 325 608 420M200 408 555 378 605 450" fill="none" strokeWidth="4" />
    <path d="M570 378 612 372 608 445 575 400z" fill="#232527" />
    {/* hob and oven */}
    <path d="M290 350 405 338 437 380 318 398z" fill="#231a1a" />
    <g fill="#cc2f35" stroke="#5a1719">
      <ellipse cx="325" cy="357" rx="24" ry="9" />
      <ellipse cx="388" cy="350" rx="24" ry="9" />
      <ellipse cx="340" cy="380" rx="26" ry="10" />
      <ellipse cx="405" cy="370" rx="24" ry="11" />
    </g>
    <path d="M313 405 437 393 428 502 312 515z" fill="#29292a" />
    <path d="M326 414 424 404 418 488 326 498z" fill="url(#oven)" stroke="none" />
    <path d="M325 404 425 396 423 418 325 428z" fill="#bdbdbd" stroke="none" />
    <path d="M355 408 370 406M380 405 390 404" stroke="#333" strokeWidth="8" />
    <path d="M328 458 420 448M328 480 418 470" stroke="#8d9090" />
    <path d="M318 522 415 510 415 525 318 535z" fill="#d9bc8a" />
    {/* fridge */}
    <path d="M617 242 750 230 803 280 683 292z" fill="#b1b3b5" />
    <path d="M683 292 803 280 768 645 643 662 655 505z" fill="#b0b2b4" />
    <path d="M617 242 683 292 643 662 590 600 603 452z" fill="#a8aaad" />
    <path d="M617 242 630 240 686 291 683 292zM668 290 643 660" fill="none" strokeWidth="3" />
    <path d="M603 452 658 505M683 292 660 500 648 662" fill="none" strokeWidth="4" />
    {/* sockets */}
    <path d="M390 148h17v16h-17zM252 310h15v16h-15zM455 291h15v15h-15z" fill="#e01a92" />
  </g>
);

const Viewport = () => (
  <main className="relative ml-[3px] min-w-0 flex-1 overflow-hidden border-2 border-[#675f35] bg-white">
    <svg viewBox="139 86 908 503" preserveAspectRatio="xMinYMin slice" className="block h-full w-full">
      <defs>
        <linearGradient id="wood" x1="0" x2="1" y1="0" y2="0.100">
          <stop offset="0" stopColor="#ae9872" />
          <stop offset="0.300" stopColor="#c2ad88" />
          <stop offset="0.550" stopColor="#b09a74" />
          <stop offset="0.800" stopColor="#c0aa84" />
          <stop offset="1" stopColor="#ab946d" />
        </linearGradient>
        <linearGradient id="counter" x1="0" x2="1">
          <stop offset="0" stopColor="#c3a17c" />
          <stop offset="0.500" stopColor="#ceb08e" />
          <stop offset="1" stopColor="#bf9c77" />
        </linearGradient>
        <linearGradient id="marble" x1="0" x2="1" y1="0" y2="0.400">
          <stop offset="0" stopColor="#eeecea" />
          <stop offset="0.300" stopColor="#e6e4e3" />
          <stop offset="0.450" stopColor="#f2f1f0" />
          <stop offset="0.650" stopColor="#e8e5e3" />
          <stop offset="1" stopColor="#f3f2f2" />
        </linearGradient>
        <linearGradient id="oven" x1="0" x2="0.400" y1="0" y2="1">
          <stop offset="0" stopColor="#4a4a4a" />
          <stop offset="0.500" stopColor="#6d7070" />
          <stop offset="1" stopColor="#2e2f30" />
        </linearGradient>
        <linearGradient id="ring" x1="0" x2="0" y1="0" y2="1">
          <stop offset="0" stopColor="#e4e4e4" />
          <stop offset="1" stopColor="#9c9c9c" />
        </linearGradient>
      </defs>
      <WallKitchen />
      <OpenKitchen />
      {/* view cube */}
      <ellipse cx="1014" cy="128" rx="20" ry="10" fill="none" stroke="#ededed" strokeWidth="3" />
      <ellipse cx="1014" cy="128" rx="18" ry="9" fill="none" stroke="url(#ring)" strokeWidth="1.500" />
      <path d="m1006 109 15-2 4 9 0 15-18 2-3-9z" fill="#e6e6e6" />
      <path d="m1006 109 15-2 3 8-18 2z" fill="#f3f3f3" stroke="#ddd" strokeWidth="0.500" />
      <circle cx="1014" cy="110" r="1.500" fill="none" stroke="#888" strokeWidth="0.600" />
      <text x="1010" y="124" fontSize="4" fontWeight="700" fill="#777">RIGHT</text>
      {/* world axes */}
      <path d="M153.500 562v13" stroke="#333" />
      <path d="M153 575 168 573" stroke="#3d7a3d" />
      <path d="m153 575 4 4" stroke="#a02c2c" />
      <text x="152" y="562" fontSize="7" fontWeight="700" fill="#222">z</text>
      <text x="168" y="575" fontSize="7" fontWeight="700" fill="#2c5f2c">y</text>
      <text x="157" y="582" fontSize="7" fontWeight="700" fill="#8c1f1f">x</text>
    </svg>
    <div className="absolute top-[3px] left-0.5 flex items-center gap-1 font-['Inter',sans-serif] text-[7px] text-[#222]">
      <span>[+][Perspective][Standard*][Flat Color + Edged Faces]</span>
      <svg viewBox="0 0 16 16" className="h-2.5 w-2.5">
        <path d="M1 2h14L10 8v6H6V8z" fill="#444" />
      </svg>
    </div>
  </main>
);

const commandTabs = ["plus", "modify", "hierarchy", "motion", "display", "wrench"];

const CommandPanel = () => (
  <aside className="flex w-[131px] shrink-0 flex-col border-t border-[#333] bg-[#434343] pr-0.5 pl-1">
    <div className="mt-px h-px bg-[#777]" />
    <div className="mt-0.5 -ml-0.5 flex h-4 items-center">
      {commandTabs.map((name) => (
        <button
          key={name}
          type="button"
          aria-label={name}
          className={clsx("flex h-4 w-5 items-center justify-center", name === "modify" && "bg-[#3a3a3a]")}
        >
          <Icon name={name} className="h-2.5 w-2.5" />
        </button>
      ))}
    </div>
    <div className="mt-1 flex h-[13px] items-center justify-between">
      <input aria-label="Object name" className="h-3 w-[110px] bg-[#5a5a5a] px-1 outline-none" />
      <button type="button" aria-label="Object color" className="h-3 w-3 border border-[#2a1a22] bg-[#c6307c]" />
    </div>
    <Dropdown label="Modifier List" value="Modifier List" className="mt-[3px] h-3 w-full" />
    <div className="mt-[3px] h-[79px] border border-[#e6e6e6]" />
    <div className="mt-1 flex h-[14px] items-center gap-px">
      <ToolButton name="pin" className="w-[15px]" />
      <Separator />
      <span className="mx-0.5 flex h-[13px] w-[14px] items-center justify-center bg-[#40587e]">
        <Icon name="stackShow" className="h-3 w-3" />
      </span>
      <Separator />
      <button type="button" aria-label="Make unique" className="flex w-[15px] justify-center">
        <Icon name="unique" className="h-2.5 w-2.5" />
      </button>
      <button type="button" aria-label="Remove modifier" className="flex w-[15px] justify-center">
        <Icon name="trash" className="h-2.5 w-2.5" />
      </button>
      <Separator />
      <button type="button" aria-label="Configure" className="flex w-5 justify-center">
        <Icon name="configure" className="h-2.5 w-2.5" />
      </button>
    </div>
    <div className="mt-[14px] flex items-center gap-1">
      <span className="h-px flex-1 bg-[#666]" />
      <span className="h-0.5 w-2 bg-[#888]" />
      <span className="h-px flex-1 bg-[#666]" />
    </div>
  </aside>
);

const Coordinate = ({ axis, value }) => (
  <label className="flex items-center gap-0.5">
    {axis}:
    <input readOnly value={value} className="h-[11px] w-[35px] bg-[#515151] text-[#858585] outline-none" />
  </label>
);

const StatusBar = () => (
  <footer className="relative flex h-[34px] shrink-0 bg-[#434343] pr-[6px]">
    <div className="flex w-[62px] shrink-0 flex-col gap-px py-1 pl-0.5">
      <div className="h-[13px] bg-[#dfc9cd]" />
      <div className="flex h-[14px] items-center bg-[#f5f5f5] pl-px font-['Liberation_Mono',monospace] text-[8px] whitespace-nowrap text-[#777]">
        MAXScript Mi
      </div>
    </div>
    <div className="ml-0.5 flex flex-col justify-between border-l border-[#2e2e2e] pt-[7px] pb-0.5 pl-0.5 whitespace-nowrap">
      <span>None Selected</span>
      <span>Click or click</span>
    </div>
    <div className="absolute bottom-0 left-[103px] flex h-[15px] w-[88px] items-center bg-white px-[5px]">
      <span className="flex h-2.5 w-2 items-center justify-center rounded-xs bg-[#1494a8] font-bold text-white">3</span>
      <Icon name="windows" className="h-2 w-2" />
      <button type="button" aria-label="Close" className="ml-auto pr-1">
        <Icon name="close" className="h-2 w-2" />
      </button>
    </div>

    <div className="ml-auto flex flex-col pt-1 whitespace-nowrap">
      <div className="flex h-[15px] items-center gap-2">
        <button type="button" aria-label="Isolate" className="flex h-3 w-3 items-center justify-center bg-[#4b73ae]">
          <Icon name="isolate" className="h-2.5 w-2.5" />
        </button>
        <Icon name="lock" className="h-2 w-2" />
        <Icon name="absolute" className="h-2.5 w-2.5" />
        <div className="-ml-1 flex gap-2">
          <Coordinate axis="X" value="3799,023m" />
          <Coordinate axis="Y" value="3822,312m" />
          <Coordinate axis="Z" value="0,0mm" />
        </div>
        <span>Grid = 0,0mm</span>
      </div>
      <div className="flex h-[15px] items-center gap-1 pl-[105px]">
        <span className="h-2.5 w-px bg-[#2a2a2a]" />
        <Icon name="shield" className="h-2.5 w-2.5" />
        <span>Enabled:</span>
        <span className="h-1.5 w-1.5 rounded-full bg-[#45d845]" />
        <Icon name="info" className="h-2.5 w-2.5" />
        <span className="mx-0.5 h-2.5 w-px bg-[#2a2a2a]" />
        <Icon name="cube" className="h-2 w-2" />
        <span>Add Time Tag</span>
      </div>
    </div>

    <div className="ml-[27px] flex w-[74px] shrink-0 flex-col pt-1">
      <div className="flex h-[15px] items-center justify-between">
        {["toStart", "prevFrame", "play", "nextFrame", "toEnd"].map((name) => (
          <button key={name} type="button" aria-label={name} className="flex w-[14px] justify-center">
            <Icon name={name} className="h-2.5 w-2.5" />
          </button>
        ))}
      </div>
      <div className="flex h-[14px] items-center justify-between pl-[3px]">
        <Icon name="keyMode" className="h-[7px] w-[7px]" />
        <span className="flex h-[11px] w-[43px] items-center bg-[#5a5a5a] pr-1">
          <input aria-label="Current frame" defaultValue="99" className="w-full min-w-0 px-0.5 outline-none" />
          <svg viewBox="0 0 4 8" className="h-[7px] w-1">
            <path d="m2 0 2 3H0zM2 8l2-3H0z" fill={W} />
          </svg>
        </span>
        <Icon name="timeCfg" className="h-2.5 w-2.5" />
      </div>
    </div>

    <button
      type="button"
      aria-label="Set keys"
      className="mt-[5px] ml-[6px] flex h-[26px] w-[26px] shrink-0 items-center justify-center bg-[#5a5a5a]"
    >
      <Icon name="bigKey" className="h-5 w-5" />
    </button>
    <div className="ml-[3px] flex w-[29px] shrink-0 flex-col gap-[3px] pt-[6px] whitespace-nowrap">
      <button type="button" className="h-[11px] bg-[#5a5a5a]">Auto Key</button>
      <button type="button" className="h-[11px] bg-[#5a5a5a]">Set Key</button>
    </div>
    <div className="ml-[3px] flex w-[70px] shrink-0 flex-col gap-[3px] pt-[6px]">
      <Dropdown label="Key set" value="Selected" className="h-[11px] w-full" />
      <div className="flex h-[11px] items-center justify-between">
        <Icon name="tangent" className="h-3 w-3" />
        <button type="button" className="h-[11px] w-[53px] bg-[#5a5a5a]">Key Filters...</button>
      </div>
    </div>
    <div className="ml-[5px] grid w-[57px] shrink-0 grid-cols-4 content-start gap-y-1 pt-[6px]">
      {["zoom", "zoomAll", "zoomExt", "zoomExtAll", "fov", "hand", "orbit", "maximize"].map((name) => (
        <button key={name} type="button" aria-label={name} className="flex justify-center">
          <Icon name={name} className="h-2.5 w-2.5" />
        </button>
      ))}
    </div>
  </footer>
);

const App = () => (
  <div className="flex h-screen flex-col overflow-hidden bg-[#434343] font-['Open_Sans',sans-serif] text-[7px] leading-[9px] text-[#ececec]">
    <MenuBar />
    <Toolbars />
    <Ribbon />
    <div className="flex min-h-0 flex-1">
      <SceneExplorer />
      <Viewport />
      <CommandPanel />
    </div>
    <StatusBar />
  </div>
);

export default App;
